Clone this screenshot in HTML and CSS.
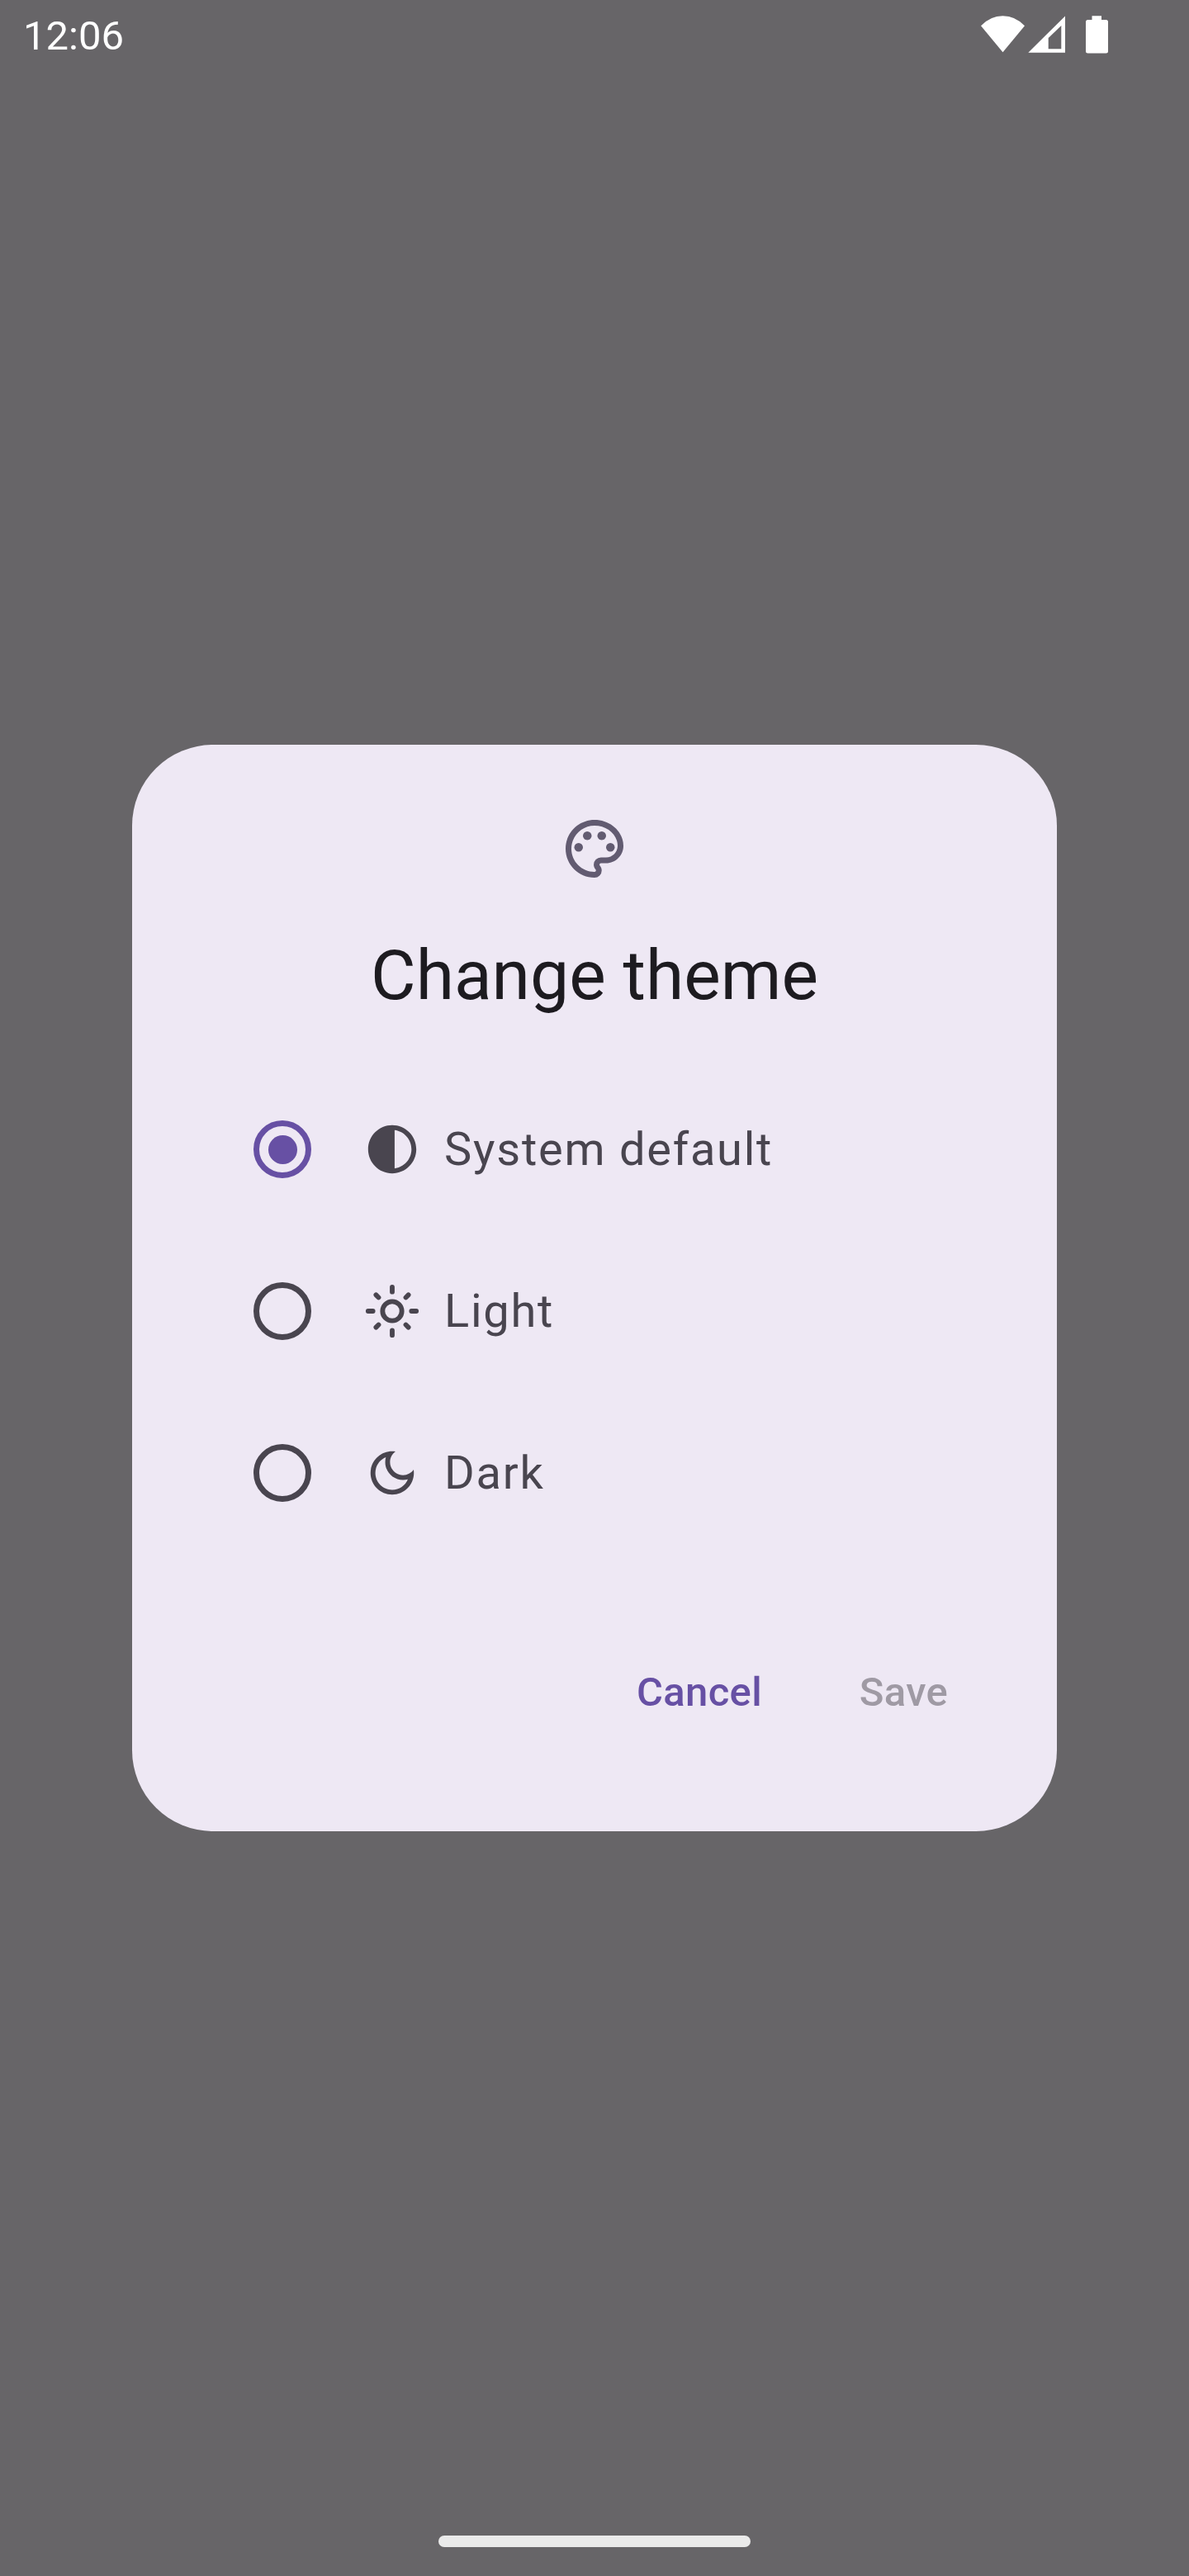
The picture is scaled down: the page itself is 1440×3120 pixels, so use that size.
FILE: index.html
```html
<!DOCTYPE html>
<html lang="en">
<head>
<meta charset="utf-8">
<title>Change theme</title>
<link rel="stylesheet" href="styles.css">
</head>
<body>
<div class="screen">
  <header class="status-bar">
    <span class="clock">12:06</span>
    <svg class="status-icons" viewBox="0 0 156 48" aria-hidden="true">
      <path d="M0 13.3Q11.5 1.3 26.5 1.3T53 13.3L26.5 45.3Z"/>
      <path fill-rule="evenodd" d="M102 1.5V45.8H57.3ZM97.3 13V41.2H81.7V28Z"/>
      <path d="M134.5 1.3H146V6H151.5Q154 6 154 8.500V44Q154 46.500 151.500 46.500H129.500Q127 46.500 127 44V8.500Q127 6 129.500 6H134.500Z"/>
    </svg>
  </header>

  <main class="scrim">
    <section class="dialog" role="dialog" aria-labelledby="title">
      <svg class="dialog-icon" viewBox="0 0 24 24" aria-hidden="true">
        <path d="M12 22C6.49 22 2 17.510 2 12S6.490 2 12 2s10 4.040 10 9c0 3.310-2.690 6-6 6h-1.770c-.28 0-.5.22-.5.5 0 .12.05.23.13.33.41.47.64 1.060.64 1.670A2.500 2.500 0 0 1 12 22zm0-18c-4.410 0-8 3.590-8 8s3.590 8 8 8c.28 0 .5-.22.5-.5a.54.54 0 0 0-.14-.35c-.41-.46-.63-1.050-.63-1.650a2.500 2.500 0 0 1 2.500-2.500H16c2.210 0 4-1.790 4-4 0-3.860-3.590-7-8-7z"/>
        <circle cx="6.5" cy="11.5" r="1.5"/>
        <circle cx="9.5" cy="7.5" r="1.5"/>
        <circle cx="14.5" cy="7.5" r="1.5"/>
        <circle cx="17.5" cy="11.5" r="1.5"/>
      </svg>
      <h1 class="title" id="title">Change theme</h1>

      <div class="options" role="radiogroup">
        <div class="option" role="radio" aria-checked="true">
          <span class="radio radio-on"></span>
          <svg class="option-icon" viewBox="0 0 24 24" aria-hidden="true">
            <path d="M12 22c5.520 0 10-4.480 10-10S17.520 2 12 2 2 6.480 2 12s4.480 10 10 10zM13 4.070c3.940.49 7 3.850 7 7.930s-3.050 7.440-7 7.930V4.070z"/>
          </svg>
          <span class="label">System default</span>
        </div>
        <div class="option" role="radio" aria-checked="false">
          <span class="radio"></span>
          <svg class="option-icon option-icon-line" viewBox="0 0 24 24" aria-hidden="true">
            <circle cx="12" cy="12" r="4"/>
            <path d="M12 2V4M12 20V22M2 12H4M20 12H22M5.280 5.280L6.340 6.340M17.660 17.660L18.720 18.720M5.280 18.720L6.340 17.660M17.660 6.340L18.720 5.280"/>
          </svg>
          <span class="label">Light</span>
        </div>
        <div class="option" role="radio" aria-checked="false">
          <span class="radio"></span>
          <svg class="option-icon" viewBox="0 0 24 24" aria-hidden="true">
            <path d="M9.370 5.510C9.190 6.150 9.100 6.820 9.100 7.500c0 4.080 3.320 7.400 7.400 7.400.68 0 1.350-.09 1.990-.27C17.450 17.190 14.930 19 12 19c-3.860 0-7-3.140-7-7 0-2.930 1.810-5.450 4.370-6.490zM12 3c-4.970 0-9 4.030-9 9s4.030 9 9 9 9-4.030 9-9c0-.46-.04-.92-.1-1.360-.98 1.370-2.580 2.260-4.400 2.260-2.980 0-5.400-2.420-5.400-5.400 0-1.810.89-3.420 2.260-4.400C12.920 3.040 12.460 3 12 3z"/>
          </svg>
          <span class="label">Dark</span>
        </div>
      </div>

      <div class="actions">
        <button class="button" type="button">Cancel</button>
        <button class="button" type="button" disabled>Save</button>
      </div>
    </section>
  </main>

  <footer class="nav-bar"><span class="nav-handle"></span></footer>
</div>
</body>
</html>
```

FILE: styles.css
```css
* {
  box-sizing: border-box;
}

body {
  margin: 0;
  font-family: Roboto, sans-serif;
}

.screen {
  display: flex;
  flex-direction: column;
  width: 1440px;
  height: 3120px;
  background: #676568;
}

.status-bar {
  display: flex;
  align-items: center;
  justify-content: space-between;
  height: 88px;
  padding: 0 96px 0 28px;
  color: #fff;
}

.clock {
  font-size: 49px;
  line-height: 58px;
}

.status-icons {
  width: 156px;
  height: 48px;
  margin-bottom: 4px;
  fill: #fff;
}

.scrim {
  display: flex;
  flex: 1;
  align-items: center;
  justify-content: center;
}

.dialog {
  display: flex;
  flex-direction: column;
  align-items: center;
  width: 1120px;
  padding: 84px;
  border-radius: 98px;
  background: #eee8f4;
}

.dialog-icon {
  width: 84px;
  height: 84px;
  fill: #625b71;
}

.title {
  margin: 56px 0;
  color: #1d1b20;
  font-size: 84px;
  font-weight: 400;
  line-height: 112px;
}

.options {
  align-self: stretch;
}

.option {
  display: flex;
  align-items: center;
  height: 196px;
  padding-left: 63px;
  color: #49454f;
}

.radio {
  display: flex;
  align-items: center;
  justify-content: center;
  width: 70px;
  height: 70px;
  border: 7px solid #49454f;
  border-radius: 50%;
}

.radio-on {
  border-color: #6750a4;
}

.radio-on::before {
  width: 35px;
  height: 35px;
  border-radius: 50%;
  background: #6750a4;
  content: "";
}

.option-icon {
  width: 70px;
  height: 70px;
  margin: 0 28px 0 63px;
  fill: currentColor;
}

.option-icon-line {
  fill: none;
  stroke: currentColor;
  stroke-width: 2;
  stroke-linecap: round;
}

.label {
  font-size: 56px;
  letter-spacing: 1.75px;
  line-height: 84px;
}

.actions {
  display: flex;
  align-self: stretch;
  justify-content: flex-end;
  gap: 28px;
  margin-top: 84px;
  padding: 14px 0;
}

.button {
  min-width: 203px;
  height: 140px;
  padding: 0 42px;
  border: 0;
  background: none;
  color: #6750a4;
  font: 500 49px/70px Roboto, sans-serif;
  letter-spacing: 0.35px;
}

.button:disabled {
  color: #9f9aa4;
}

.nav-bar {
  display: flex;
  align-items: center;
  justify-content: center;
  height: 88px;
  padding-top: 4px;
}

.nav-handle {
  width: 378px;
  height: 14px;
  border-radius: 7px;
  background: #eaeaea;
}
```
